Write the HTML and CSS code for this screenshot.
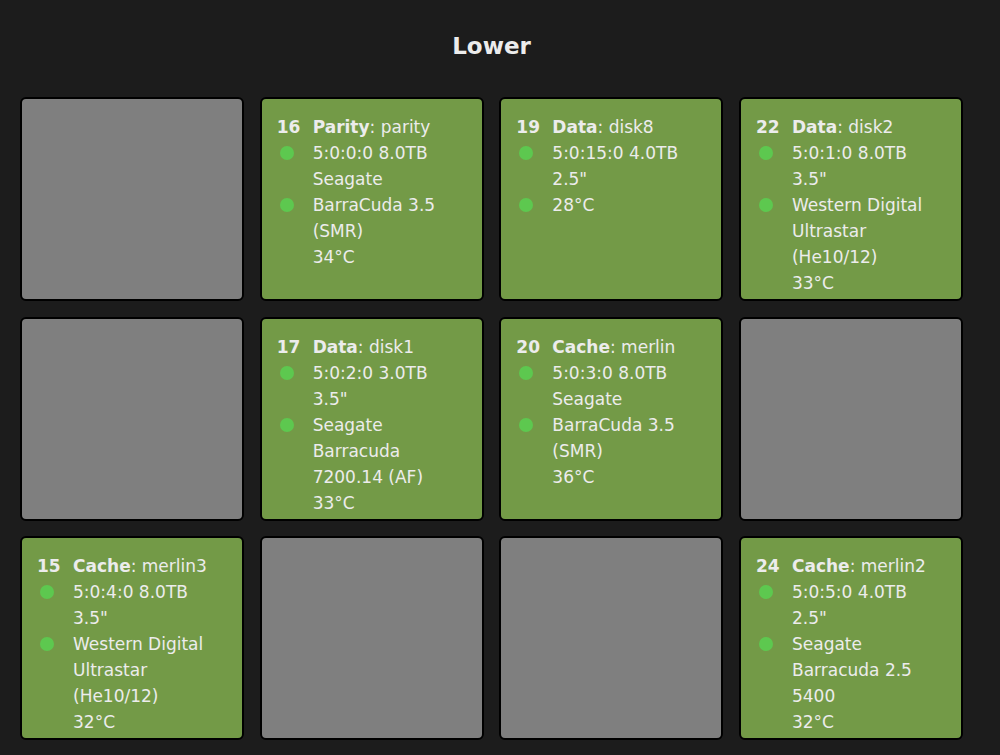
FILE: index.html
```html
<!DOCTYPE html>
<html lang="en">
  <head>
    <meta charset="UTF-8" />
    <meta name="viewport" content="width=device-width, initial-scale=1.0" />
    <title>Lower</title>
    <link rel="stylesheet" href="styles.css">
  </head>
  <body>
    <div class="page">
      <h1>Lower</h1>
      <div class="bays">
        <div class="bay empty"></div>

        <div class="bay">
          <div class="row"><span class="num">16</span><span><b>Parity</b>: parity</span></div>
          <div class="row"><span class="dot"></span><span>5:0:0:0 8.0TB<br>Seagate</span></div>
          <div class="row"><span class="dot"></span><span>BarraCuda 3.5<br>(SMR)<br>34°C</span></div>
        </div>

        <div class="bay">
          <div class="row"><span class="num">19</span><span><b>Data</b>: disk8</span></div>
          <div class="row"><span class="dot"></span><span>5:0:15:0 4.0TB<br>2.5"</span></div>
          <div class="row"><span class="dot"></span><span>28°C</span></div>
        </div>

        <div class="bay">
          <div class="row"><span class="num">22</span><span><b>Data</b>: disk2</span></div>
          <div class="row"><span class="dot"></span><span>5:0:1:0 8.0TB<br>3.5"</span></div>
          <div class="row"><span class="dot"></span><span>Western Digital<br>Ultrastar<br>(He10/12)<br>33°C</span></div>
        </div>

        <div class="bay empty"></div>

        <div class="bay">
          <div class="row"><span class="num">17</span><span><b>Data</b>: disk1</span></div>
          <div class="row"><span class="dot"></span><span>5:0:2:0 3.0TB<br>3.5"</span></div>
          <div class="row"><span class="dot"></span><span>Seagate<br>Barracuda<br>7200.14 (AF)<br>33°C</span></div>
        </div>

        <div class="bay">
          <div class="row"><span class="num">20</span><span><b>Cache</b>: merlin</span></div>
          <div class="row"><span class="dot"></span><span>5:0:3:0 8.0TB<br>Seagate</span></div>
          <div class="row"><span class="dot"></span><span>BarraCuda 3.5<br>(SMR)<br>36°C</span></div>
        </div>

        <div class="bay empty"></div>

        <div class="bay">
          <div class="row"><span class="num">15</span><span><b>Cache</b>: merlin3</span></div>
          <div class="row"><span class="dot"></span><span>5:0:4:0 8.0TB<br>3.5"</span></div>
          <div class="row"><span class="dot"></span><span>Western Digital<br>Ultrastar<br>(He10/12)<br>32°C</span></div>
        </div>

        <div class="bay empty"></div>

        <div class="bay empty"></div>

        <div class="bay">
          <div class="row"><span class="num">24</span><span><b>Cache</b>: merlin2</span></div>
          <div class="row"><span class="dot"></span><span>5:0:5:0 4.0TB<br>2.5"</span></div>
          <div class="row"><span class="dot"></span><span>Seagate<br>Barracuda 2.5<br>5400<br>32°C</span></div>
        </div>
      </div>
    </div>
  </body>
</html>
```

FILE: styles.css
```css
body {
  margin: 0;
  background: #1c1c1c;
  color: #ececec;
  font-family: "DejaVu Sans", "Noto Sans", sans-serif;
}
.page {
  width: 943px;
  padding: 0 20px;
}
h1 {
  margin: 0;
  padding-top: 28px;
  height: 97px;
  box-sizing: border-box;
  text-align: center;
  font-size: 23px;
  line-height: 36px;
  font-weight: bold;
}
.bays {
  display: grid;
  grid-template-columns: repeat(4, 224px);
  grid-auto-rows: 204px;
  column-gap: 15.67px;
  row-gap: 15.5px;
}
.bay {
  box-sizing: border-box;
  border: 2px solid #000;
  border-radius: 6px;
  background: #739a47;
  padding: 15px 6px 0 15px;
  font-size: 17px;
  line-height: 26px;
  overflow: hidden;
  white-space: nowrap;
}
.bay.empty {
  background: #7f7f7f;
}
.row {
  display: grid;
  grid-template-columns: 36px 1fr;
}
.num {
  font-weight: bold;
}
.dot {
  width: 14px;
  height: 14px;
  margin: 6px 0 0 3px;
  border-radius: 50%;
  background: #5dc84f;
}
b {
  font-weight: bold;
}
```
